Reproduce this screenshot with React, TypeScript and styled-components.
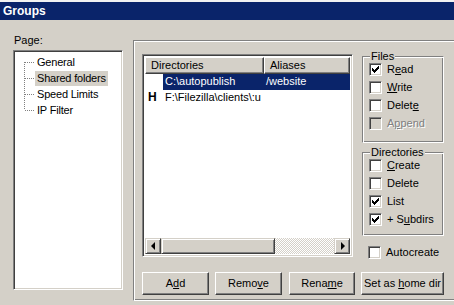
import React from "react";
import styled, { createGlobalStyle, css } from "styled-components";

const Global = createGlobalStyle`
  html, body { margin: 0; padding: 0; background: #d4d0c8; }
  body { font-family: "Liberation Sans", Arial, sans-serif; font-size: 11px; color: #000; }
  * { box-sizing: border-box; }
`;

const sunken = css`
  border: 1px solid;
  border-color: #808080 #fff #fff #808080;
  box-shadow: inset 1px 1px #404040, inset -1px -1px #d4d0c8;
`;

const raised = css`
  border: 1px solid;
  border-color: #fff #404040 #404040 #fff;
  box-shadow: inset -1px -1px #808080;
  background: #d4d0c8;
`;

const etched = css`
  border: 1px solid;
  border-color: #808080 #fff #fff #808080;
  box-shadow: inset 1px 1px #fff, inset -1px -1px #808080;
`;

const Window = styled.div`
  width: 454px;
  height: 305px;
  overflow: hidden;
  background: #d4d0c8;
  border-top: 2px solid #f2f2f2;
  display: flex;
  flex-direction: column;
`;

const TitleBar = styled.div`
  flex: none;
  height: 18px;
  background: #0a246a;
  color: #fff;
  font-weight: bold;
  font-size: 12px;
  display: flex;
  align-items: center;
  padding-left: 3px;
`;

const Content = styled.div`
  display: flex;
  align-items: flex-start;
  flex: 1;
`;

const LeftCol = styled.div`
  display: flex;
  flex-direction: column;
  margin-left: 13px;
  padding-top: 14px;
  width: 110px;
  flex: none;
`;

const PageLabel = styled.div`
  line-height: 13px;
  margin-left: 1px;
  margin-bottom: 3px;
`;

const TreeBox = styled.div`
  ${sunken};
  background: #fff;
  height: 240px;
  padding: 3px 0 0 10px;
`;

const TreeRow = styled.div`
  display: flex;
  align-items: center;
  height: 16px;
`;

const Connector = styled.span<{ $pos: "first" | "mid" | "last" }>`
  width: 10px;
  height: 16px;
  flex: none;
  margin-right: 1px;
  background-image:
    repeating-linear-gradient(to right, #808080 0 1px, transparent 1px 2px),
    repeating-linear-gradient(to bottom, #808080 0 1px, transparent 1px 2px);
  background-repeat: no-repeat;
  background-size: 9px 1px,
    1px ${(p) => (p.$pos === "mid" ? "16px" : "8px")};
  background-position: 1px 8px,
    0 ${(p) => (p.$pos === "first" ? "8px" : "0")};
`;

const TreeText = styled.span<{ $selected?: boolean }>`
  padding: 0 2px 1px 2px;
  line-height: 14px;
  letter-spacing: -0.2px;
  background: ${(p) => (p.$selected ? "#d4d0c8" : "transparent")};
`;

const Panel = styled.div`
  ${etched};
  flex: none;
  margin-left: 10px;
  margin-top: 20px;
  width: 340px;
  height: 261px;
  padding: 9px 0 0 8px;
  display: flex;
  flex-direction: column;
`;

const TopRow = styled.div`
  display: flex;
  align-items: flex-start;
`;

const ListView = styled.div`
  ${sunken};
  background: #fff;
  margin-top: 4px;
  width: 211px;
  height: 203px;
  padding: 2px;
  display: flex;
  flex-direction: column;
`;

const Header = styled.div`
  display: flex;
  height: 17px;
  flex: none;
`;

const HeaderCell = styled.div<{ $w?: number }>`
  ${raised};
  ${(p) => (p.$w ? `width: ${p.$w}px;` : "flex: 1;")}
  height: 17px;
  line-height: 14px;
  padding-left: 5px;
`;

const Row = styled.div`
  display: flex;
  height: 16px;
  line-height: 15px;
  flex: none;
`;

const IconCell = styled.div`
  width: 18px;
  flex: none;
  font-weight: bold;
  font-size: 12px;
  padding-left: 3px;
`;

const RowBody = styled.div<{ $selected?: boolean }>`
  display: flex;
  flex: 1;
  background: ${(p) => (p.$selected ? "#0a246a" : "transparent")};
  color: ${(p) => (p.$selected ? "#fff" : "#000")};
`;

const Cell = styled.div<{ $w?: number }>`
  ${(p) => (p.$w ? `width: ${p.$w}px;` : "flex: 1;")}
  white-space: nowrap;
  overflow: hidden;
  padding-left: 2px;
`;

const Spacer = styled.div`
  flex: 1;
`;

const HScroll = styled.div`
  display: flex;
  height: 16px;
  flex: none;
`;

const scrollPart = css`
  height: 16px;
  flex: none;
  border: 1px solid;
  border-color: #d4d0c8 #404040 #404040 #d4d0c8;
  box-shadow: inset 1px 1px #fff, inset -1px -1px #808080;
  background: #d4d0c8;
`;

const ScrollBtn = styled.div`
  ${scrollPart};
  width: 16px;
  display: flex;
  align-items: center;
  justify-content: center;
`;

const Arrow = styled.span<{ $dir: "left" | "right" }>`
  width: 0;
  height: 0;
  border-top: 4px solid transparent;
  border-bottom: 4px solid transparent;
  ${(p) =>
    p.$dir === "left"
      ? "border-right: 4px solid #000; margin-right: 1px;"
      : "border-left: 4px solid #000; margin-left: 1px;"}
`;

const Thumb = styled.div`
  ${scrollPart};
  width: 114px;
`;

const Track = styled.div`
  flex: 1;
  background: repeating-conic-gradient(#fff 0 25%, #d4d0c8 0 50%) 0 0 / 2px 2px;
`;

const Side = styled.div`
  margin-left: 9px;
  width: 82px;
  display: flex;
  flex-direction: column;
  flex: none;
`;

const Group = styled.fieldset<{ $h: number; $mt?: number }>`
  ${etched};
  margin: ${(p) => p.$mt ?? 0}px 0 0 0;
  padding: 0 0 0 6px;
  height: ${(p) => p.$h}px;
  min-width: 0;
`;

const Legend = styled.legend`
  padding: 0 1px;
  margin-left: 1px;
  line-height: 12px;
  background: #d4d0c8;
`;

const Rows = styled.div<{ $offset: number; $step: number }>`
  display: flex;
  flex-direction: column;
  margin-top: ${(p) => p.$offset}px;
  & > * {
    height: ${(p) => p.$step}px;
  }
`;

const CheckRow = styled.label<{ $disabled?: boolean }>`
  display: flex;
  align-items: center;
  height: 18px;
  color: ${(p) => (p.$disabled ? "#808080" : "#000")};
  text-shadow: ${(p) => (p.$disabled ? "1px 1px #fff" : "none")};
`;

const Box = styled.span<{ $disabled?: boolean }>`
  ${sunken};
  width: 13px;
  height: 13px;
  flex: none;
  background: ${(p) => (p.$disabled ? "#d4d0c8" : "#fff")};
  margin-right: 5px;
  display: flex;
  align-items: center;
  justify-content: center;
`;

const AutoRow = styled(CheckRow)`
  margin-top: 8px;
  margin-left: 6px;
  height: 16px;
`;

const ButtonRow = styled.div`
  display: flex;
  margin-top: 12px;
`;

const Button = styled.div<{ $w: number; $ml?: number }>`
  ${raised};
  width: ${(p) => p.$w}px;
  margin-left: ${(p) => p.$ml ?? 0}px;
  height: 23px;
  display: flex;
  align-items: center;
  justify-content: center;
  padding-bottom: 1px;
  white-space: nowrap;
`;

const Check = () => (
  <svg width="7" height="7" viewBox="0 0 7 7">
    <path d="M0 2h1v1h1v1h1V3h1V2h1V1h1V0h1v3H6v1H5v1H4v1H3v1H2V6H1V5H0z" fill="#000" />
  </svg>
);

type CB = { label: React.ReactNode; checked?: boolean; disabled?: boolean };

const CheckItem = ({ label, checked, disabled }: CB) => (
  <CheckRow $disabled={disabled}>
    <Box $disabled={disabled}>{checked && <Check />}</Box>
    <span>{label}</span>
  </CheckRow>
);

const treeItems = ["General", "Shared folders", "Speed Limits", "IP Filter"];

export default function App() {
  return (
    <>
      <Global />
      <Window>
        <TitleBar>Groups</TitleBar>
        <Content>
          <LeftCol>
            <PageLabel>Page:</PageLabel>
            <TreeBox>
              {treeItems.map((t, i) => {
                const pos = i === 0 ? "first" : i === treeItems.length - 1 ? "last" : "mid";
                return (
                  <TreeRow key={t}>
                    <Connector $pos={pos} />
                    <TreeText $selected={i === 1}>{t}</TreeText>
                  </TreeRow>
                );
              })}
            </TreeBox>
          </LeftCol>
          <Panel>
            <TopRow>
              <ListView>
                <Header>
                  <HeaderCell $w={119}>Directories</HeaderCell>
                  <HeaderCell>Aliases</HeaderCell>
                </Header>
                <Row>
                  <IconCell />
                  <RowBody $selected>
                    <Cell $w={101}>C:\autopublish</Cell>
                    <Cell>/website</Cell>
                  </RowBody>
                </Row>
                <Row>
                  <IconCell>H</IconCell>
                  <RowBody>
                    <Cell $w={101}>F:\Filezilla\clients\:u</Cell>
                    <Cell></Cell>
                  </RowBody>
                </Row>
                <Spacer />
                <HScroll>
                  <ScrollBtn>
                    <Arrow $dir="left" />
                  </ScrollBtn>
                  <Thumb />
                  <Track />
                  <ScrollBtn>
                    <Arrow $dir="right" />
                  </ScrollBtn>
                </HScroll>
              </ListView>
              <Side>
                <Group $h={93}>
                  <Legend>Files</Legend>
                  <Rows $offset={-2} $step={18}>
                    <CheckItem checked label={<>R<u>e</u>ad</>} />
                    <CheckItem label={<><u>W</u>rite</>} />
                    <CheckItem label={<>Delet<u>e</u></>} />
                    <CheckItem disabled label={<>A<u>p</u>pend</>} />
                  </Rows>
                </Group>
                <Group $h={90} $mt={3}>
                  <Legend>Directories</Legend>
                  <Rows $offset={-2} $step={18}>
                    <CheckItem label={<><u>C</u>reate</>} />
                    <CheckItem label="Delete" />
                    <CheckItem checked label="List" />
                    <CheckItem checked label={<>+ S<u>u</u>bdirs</>} />
                  </Rows>
                </Group>
                <AutoRow>
                  <Box />
                  <span>Autocreate</span>
                </AutoRow>
              </Side>
            </TopRow>
            <ButtonRow>
              <Button $w={67}><span>A<u>d</u>d</span></Button>
              <Button $w={67} $ml={6}><span>Remo<u>v</u>e</span></Button>
              <Button $w={66} $ml={7}><span>Rena<u>m</u>e</span></Button>
              <Button $w={83} $ml={6}><span>Set as <u>h</u>ome dir</span></Button>
            </ButtonRow>
          </Panel>
        </Content>
      </Window>
    </>
  );
}
